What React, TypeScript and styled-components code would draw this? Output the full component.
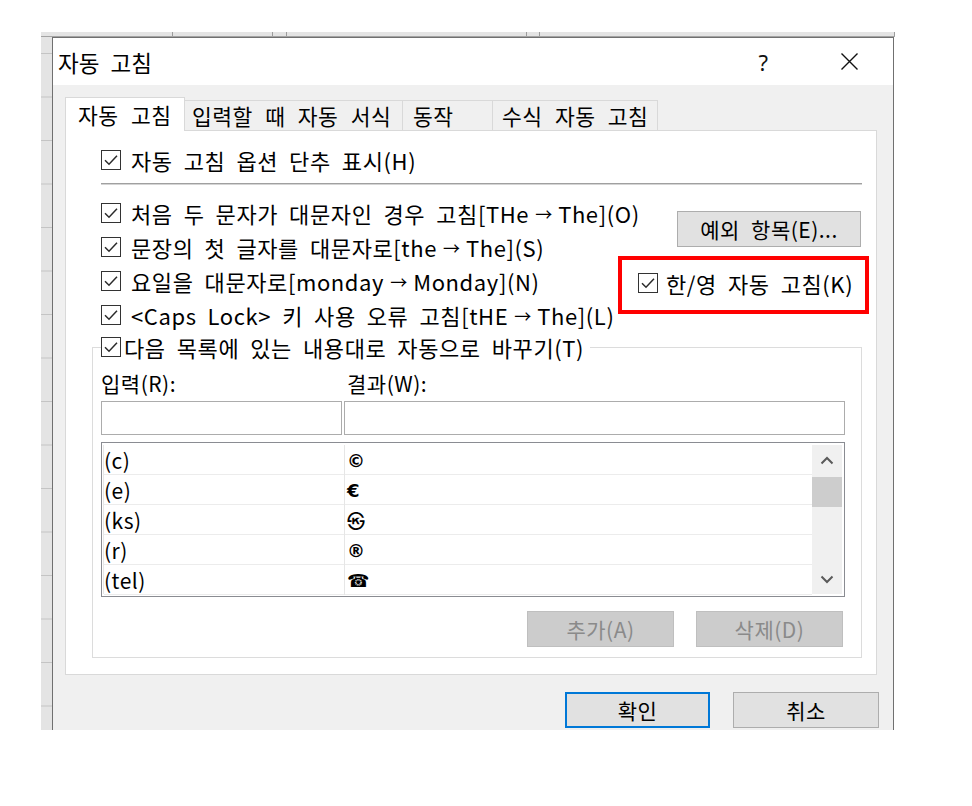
import React from "react";
import styled, { createGlobalStyle } from "styled-components";

const GlobalStyle = createGlobalStyle`
  html, body { margin: 0; padding: 0; background: #fff; }
  body { font-family: "Noto Sans CJK KR", "Noto Sans", sans-serif; color: #000; }
  * { box-sizing: border-box; }
`;

const Page = styled.div`
  width: 972px;
  height: 806px;
  padding: 32px 0 0 41px;
  background: #fff;
`;

const Sheet = styled.div`
  width: 854px;
  height: 698px;
  overflow: hidden;
  display: grid;
  grid-template-columns: 11px 1fr;
  grid-template-rows: 5px 1fr;
  background: #fff;
`;

const ColumnHeader = styled.div`
  grid-column: 1 / -1;
  display: flex;
  background: #e4e4e4;
  border-bottom: 1px solid #a3a3a3;
`;

const HeaderCell = styled.div<{ $w?: number }>`
  flex: ${(p) => (p.$w ? `0 0 ${p.$w}px` : "1 1 auto")};
  border-right: 1px solid #9c9c9c;
`;

const RowHeader = styled.div`
  background-color: #e4e4e4;
  background-image: linear-gradient(to bottom, transparent 42.5px, #c4c4c4 42.5px);
  background-size: 100% 43.5px;
  background-position: 0 -26.5px;
`;

const Dialog = styled.div`
  width: 842px;
  height: 760px;
  border: 1px solid #707070;
  background: #f0f0f0;
  display: flex;
  flex-direction: column;
`;

const TitleBar = styled.div`
  height: 47px;
  flex: none;
  background: #fff;
  display: flex;
  align-items: center;
  padding: 0 34px 0 5px;
`;

const Title = styled.div`
  font-size: 22.5px;
  word-spacing: 6px;
  white-space: nowrap;
`;

const HelpMark = styled.div`
  margin-left: auto;
  margin-right: 72px;
  font-family: "Noto Sans", sans-serif;
  font-size: 22px;
  color: #111;
`;

const Body = styled.div`
  flex: 1;
  display: flex;
  flex-direction: column;
  padding: 12px 16px 0 12px;
`;

const TabStrip = styled.div`
  height: 33px;
  display: flex;
  align-items: flex-start;
`;

const Tab = styled.div<{ $active?: boolean; $w: number; $pl: number }>`
  position: relative;
  width: ${(p) => p.$w}px;
  height: ${(p) => (p.$active ? 34 : 30)}px;
  margin-top: ${(p) => (p.$active ? 0 : 3)}px;
  padding-left: ${(p) => p.$pl}px;
  display: flex;
  align-items: center;
  background: ${(p) => (p.$active ? "#fff" : "#f0f0f0")};
  border: 1px solid #d9d9d9;
  border-bottom: none;
  margin-left: ${(p) => (p.$active ? 0 : -1)}px;
  z-index: ${(p) => (p.$active ? 2 : 1)};
  font-size: 21.5px;
  letter-spacing: 0.5px;
  word-spacing: 7px;
  white-space: nowrap;
`;

const Panel = styled.div`
  height: 545px;
  background: #fff;
  border: 1px solid #d9d9d9;
  padding: 12px 14px 0 26px;
  display: flex;
  flex-direction: column;
`;

const TopSection = styled.div`
  padding-left: 9px;
  display: flex;
  flex-direction: column;
`;

const OptionRow = styled.label<{ $gap?: number; $h?: number }>`
  display: flex;
  align-items: center;
  gap: ${(p) => p.$gap ?? 10}px;
  height: ${(p) => p.$h ?? 34}px;
  font-size: 22px;
  letter-spacing: 0.6px;
  word-spacing: 5.5px;
  white-space: nowrap;
`;

const OptionText = styled.span`
  display: inline-flex;
  align-items: center;
`;

const Arrow = styled.span`
  font-size: 17px;
  letter-spacing: 0;
  margin: 0 6px;
`;

const Box = styled.span`
  width: 20px;
  height: 20px;
  flex: none;
  border: 1px solid #333;
  background: #fff;
  display: inline-flex;
  align-items: center;
  justify-content: center;
`;

const Separator = styled.div`
  margin-top: 6px;
  height: 2px;
  border-top: 1px solid #a0a0a0;
  border-bottom: 1px solid #d4d4d4;
`;

const OptionsGrid = styled.div`
  margin-top: 11px;
  display: grid;
  grid-template-columns: minmax(0, 1fr) auto;
`;

const OptionList = styled.div`
  display: flex;
  flex-direction: column;
`;

const SideColumn = styled.div`
  display: flex;
  flex-direction: column;
  align-items: flex-end;
  width: 244px;
`;

const PushButton = styled.button<{ $w: number; $disabled?: boolean; $default?: boolean }>`
  width: ${(p) => p.$w}px;
  height: 36px;
  flex: none;
  font-family: inherit;
  font-size: 21px;
  letter-spacing: 0.5px;
  word-spacing: 6px;
  color: ${(p) => (p.$disabled ? "#8a8a8a" : "#000")};
  background: ${(p) => (p.$disabled ? "#cccccc" : "#e1e1e1")};
  border: ${(p) =>
    p.$default ? "2px solid #0078d7" : p.$disabled ? "1px solid #bfbfbf" : "1px solid #adadad"};
  padding: 0;
  display: flex;
  align-items: center;
  justify-content: center;
  white-space: nowrap;
`;

const ExceptionButton = styled(PushButton)`
  margin-top: 15px;
  margin-right: 1px;
`;

const HighlightBox = styled.div`
  margin-top: 9px;
  margin-right: -7px;
  width: 251px;
  height: 58px;
  flex: none;
  border: 4px solid #ff0000;
  padding: 0 0 5px 16px;
  display: flex;
  align-items: center;
`;

const Group = styled.fieldset`
  margin: 3px 0 0;
  padding: 12px 16px 10px 8px;
  border: 1px solid #dcdcdc;
  min-width: 0;
  display: flex;
  flex-direction: column;
`;

const Legend = styled.legend`
  padding: 0 6px 0 0;
`;

const FieldGrid = styled.div<{ $mt?: number }>`
  display: grid;
  grid-template-columns: 241px 1fr;
  gap: 2px;
  margin-top: ${(p) => p.$mt ?? 0}px;
`;

const FieldLabel = styled.div<{ $indent?: number }>`
  height: 24px;
  display: flex;
  align-items: center;
  padding-left: ${(p) => p.$indent ?? 0}px;
  font-size: 21px;
  letter-spacing: 0.5px;
`;

const TextBox = styled.div`
  height: 34px;
  border: 1px solid #acacac;
  background: #fff;
`;

const ListBox = styled.div`
  margin-top: 7px;
  height: 155px;
  border: 1px solid #8a8c92;
  background: #fff;
  padding: 2px 2px 2px 1px;
  display: flex;
`;

const Rows = styled.div`
  flex: 1;
  border-left: 1px solid #e6e6e6;
  display: flex;
  flex-direction: column;
`;

const Row = styled.div`
  height: 30px;
  flex: none;
  display: grid;
  grid-template-columns: 241px 1fr;
  border-bottom: 1px solid #ececec;
`;

const Cell = styled.div<{ $symbol?: boolean }>`
  display: flex;
  align-items: center;
  padding-left: ${(p) => (p.$symbol ? 2 : 0)}px;
  border-right: ${(p) => (p.$symbol ? "none" : "1px solid #e6e6e6")};
  font-size: ${(p) => (p.$symbol ? 18 : 21)}px;
  font-family: ${(p) =>
    p.$symbol
      ? '"DejaVu Sans", "Noto Sans CJK KR", sans-serif'
      : '"Noto Sans CJK KR", "Noto Sans", sans-serif'};
  font-weight: ${(p) => (p.$symbol ? 700 : 400)};
  letter-spacing: 0.5px;
`;

const ScrollBar = styled.div`
  width: 30px;
  flex: none;
  background: #f0f0f0;
  display: flex;
  flex-direction: column;
`;

const ScrollArrow = styled.div`
  height: 30px;
  flex: none;
  display: flex;
  align-items: center;
  justify-content: center;
`;

const ScrollThumb = styled.div`
  height: 30px;
  margin-top: 2px;
  background: #cdcdcd;
`;

const ScrollTrack = styled.div`
  flex: 1;
`;

const ButtonRow = styled.div`
  margin-top: 14px;
  margin-right: 2px;
  display: flex;
  justify-content: flex-end;
  gap: 22px;
`;

const Footer = styled.div`
  margin-top: 17px;
  margin-right: -2px;
  display: flex;
  justify-content: flex-end;
  gap: 23px;
`;

const Check = () => (
  <Box>
    <svg width="18" height="18" viewBox="0 0 18 18">
      <polyline points="3,9.3 7,13.2 15,4.8" fill="none" stroke="#2b2b2b" strokeWidth="1.5" />
    </svg>
  </Box>
);

const CloseIcon = () => (
  <svg width="19" height="19" viewBox="0 0 19 19">
    <path d="M1.5 1.5 L17.5 17.5 M17.5 1.5 L1.5 17.5" stroke="#111" strokeWidth="1.4" fill="none" />
  </svg>
);

const Chevron = ({ up }: { up?: boolean }) => (
  <svg width="14" height="9" viewBox="0 0 14 9">
    <polyline
      points={up ? "1.5,7.5 7,2 12.5,7.5" : "1.5,1.5 7,7 12.5,1.5"}
      fill="none"
      stroke="#5a5a5a"
      strokeWidth="2"
    />
  </svg>
);

const tabs = [
  { label: "자동 고침", w: 120, pl: 12, active: true },
  { label: "입력할 때 자동 서식", w: 219, pl: 7 },
  { label: "동작", w: 91, pl: 10 },
  { label: "수식 자동 고침", w: 166, pl: 9 },
];

const options = [
  { before: "처음 두 문자가 대문자인 경우 고침[THe", after: "The](O)" },
  { before: "문장의 첫 글자를 대문자로[the", after: "The](S)" },
  { before: "요일을 대문자로[monday", after: "Monday](N)" },
  { before: "<Caps Lock> 키 사용 오류 고침[tHE", after: "The](L)" },
];

const entries = [
  { from: "(c)", to: "©" },
  { from: "(e)", to: "€" },
  { from: "(ks)", to: "㉿" },
  { from: "(r)", to: "®" },
  { from: "(tel)", to: "☎" },
];

export default function App() {
  return (
    <>
      <GlobalStyle />
      <Page>
        <Sheet>
          <ColumnHeader>
            <HeaderCell $w={132} />
            <HeaderCell $w={100} />
            <HeaderCell $w={14} />
            <HeaderCell $w={240} />
            <HeaderCell $w={13} />
            <HeaderCell />
          </ColumnHeader>
          <RowHeader />
          <Dialog>
            <TitleBar>
              <Title>자동 고침</Title>
              <HelpMark>?</HelpMark>
              <CloseIcon />
            </TitleBar>
            <Body>
              <TabStrip>
                {tabs.map((t) => (
                  <Tab key={t.label} $active={t.active} $w={t.w} $pl={t.pl}>
                    {t.label}
                  </Tab>
                ))}
              </TabStrip>
              <Panel>
                <TopSection>
                  <OptionRow>
                    <Check />
                    자동 고침 옵션 단추 표시(H)
                  </OptionRow>
                  <Separator />
                  <OptionsGrid>
                    <OptionList>
                      {options.map((o) => (
                        <OptionRow key={o.before}>
                          <Check />
                          <OptionText>
                            {o.before}
                            <Arrow>→</Arrow>
                            {o.after}
                          </OptionText>
                        </OptionRow>
                      ))}
                    </OptionList>
                    <SideColumn>
                      <ExceptionButton $w={184}>예외 항목(E)...</ExceptionButton>
                      <HighlightBox>
                        <OptionRow $gap={8}>
                          <Check />
                          한/영 자동 고침(K)
                        </OptionRow>
                      </HighlightBox>
                    </SideColumn>
                  </OptionsGrid>
                </TopSection>
                <Group>
                  <Legend>
                    <OptionRow $gap={3} $h={24}>
                      <Check />
                      다음 목록에 있는 내용대로 자동으로 바꾸기(T)
                    </OptionRow>
                  </Legend>
                  <FieldGrid>
                    <FieldLabel>입력(R):</FieldLabel>
                    <FieldLabel $indent={3}>결과(W):</FieldLabel>
                  </FieldGrid>
                  <FieldGrid $mt={6}>
                    <TextBox />
                    <TextBox />
                  </FieldGrid>
                  <ListBox>
                    <Rows>
                      {entries.map((e) => (
                        <Row key={e.from}>
                          <Cell>{e.from}</Cell>
                          <Cell $symbol>{e.to}</Cell>
                        </Row>
                      ))}
                    </Rows>
                    <ScrollBar>
                      <ScrollArrow>
                        <Chevron up />
                      </ScrollArrow>
                      <ScrollThumb />
                      <ScrollTrack />
                      <ScrollArrow>
                        <Chevron />
                      </ScrollArrow>
                    </ScrollBar>
                  </ListBox>
                  <ButtonRow>
                    <PushButton $w={147} $disabled>
                      추가(A)
                    </PushButton>
                    <PushButton $w={147} $disabled>
                      삭제(D)
                    </PushButton>
                  </ButtonRow>
                </Group>
              </Panel>
              <Footer>
                <PushButton $w={145} $default>
                  확인
                </PushButton>
                <PushButton $w={146}>취소</PushButton>
              </Footer>
            </Body>
          </Dialog>
        </Sheet>
      </Page>
    </>
  );
}
